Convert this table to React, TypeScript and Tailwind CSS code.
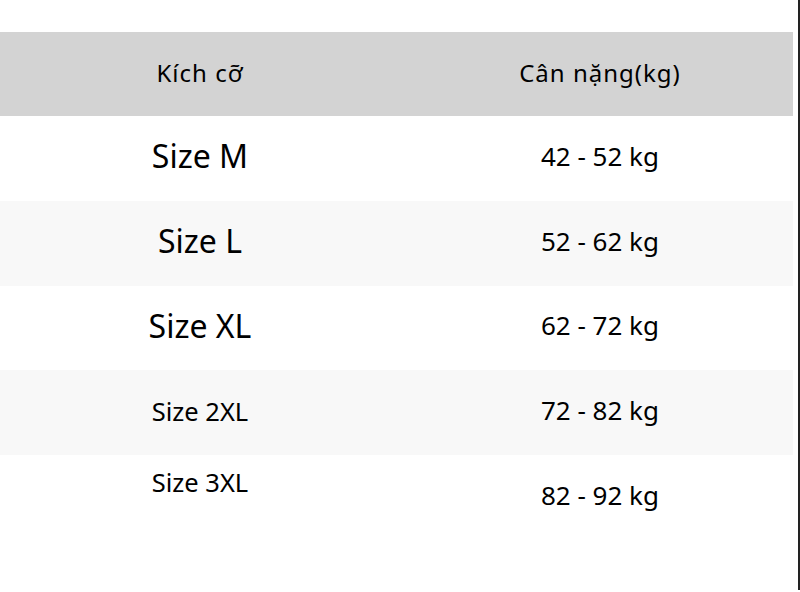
const rows = [
  { size: 'Size M', weight: '42 - 52 kg', big: true },
  { size: 'Size L', weight: '52 - 62 kg', big: true },
  { size: 'Size XL', weight: '62 - 72 kg', big: true },
  { size: 'Size 2XL', weight: '72 - 82 kg', big: false },
  { size: 'Size 3XL', weight: '82 - 92 kg', big: false },
];

export default function App() {
  return (
    <div className="relative h-[592px] w-[800px] bg-white pt-8 font-['Noto_Sans','Open_Sans',sans-serif] text-black">
      <div className="grid h-[84px] grid-cols-2 items-center bg-[#d3d3d3] pb-[2px] text-center text-[24px] tracking-[1px]">
        <div>Kích cỡ</div>
        <div>Cân nặng(kg)</div>
      </div>
      {rows.map((r, i) => (
        <div
          key={r.size}
          className={`grid h-[84.8px] grid-cols-2 items-center pb-[4px] text-center ${i % 2 === 1 ? 'bg-[#f8f8f8]' : 'bg-white'}`}
        >
          <div className={r.big ? 'text-[32px]' : 'text-[25.5px]'}>
            {r.size}
            {i === rows.length - 1 && <div className="h-[26px]" />}
          </div>
          <div className="text-[26px]">{r.weight}</div>
        </div>
      ))}
      <div className="absolute top-0 right-0 h-[590px] w-[7px] border-r-2 border-[#222] bg-white" />
    </div>
  );
}
